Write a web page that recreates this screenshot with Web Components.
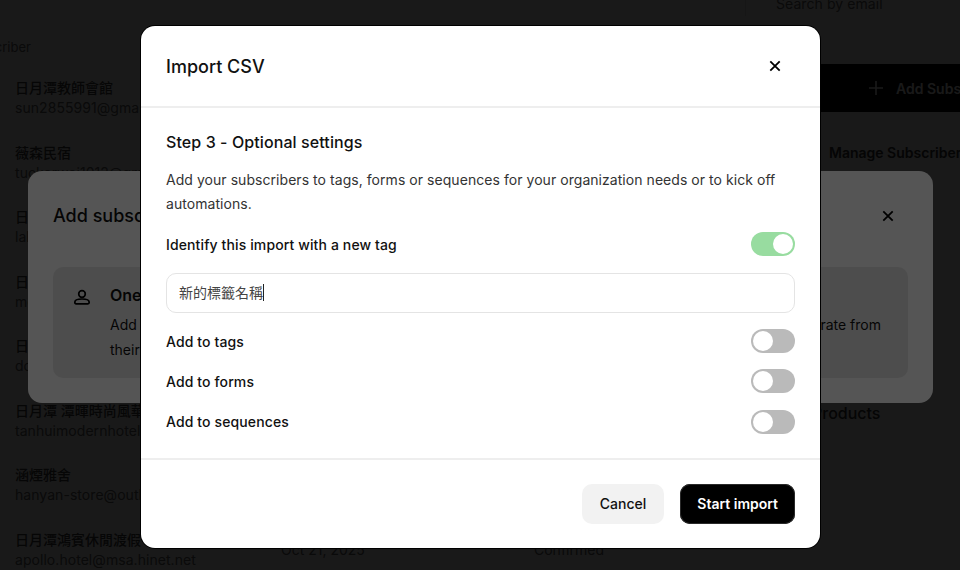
<!DOCTYPE html>
<html lang="zh-Hant">
<head>
<meta charset="utf-8">
<title>Import CSV</title>
<style>
  html, body { margin: 0; padding: 0; height: 100%; overflow: hidden; background: #191919; }
  body { font-family: Inter, "Noto Sans CJK TC", sans-serif; }
</style>
</head>
<body>
<subscribers-page></subscribers-page>
<modal-scrim level="1"></modal-scrim>
<add-dialog></add-dialog>
<modal-scrim level="2"></modal-scrim>
<import-modal></import-modal>

<script>
class SubscriberRow extends HTMLElement {
  connectedCallback() {
    const shadow = this.shadowRoot || this.attachShadow({ mode: "open" });
    shadow.innerHTML = `
      <style>
        :host {
          display: grid;
          grid-template-columns: 266px 253px 1fr;
          height: 64.5px;
          font-size: 14px;
          line-height: 20px;
          color: #666;
        }
        .name { font-weight: 500; color: #444; }
        .email { letter-spacing: .05px; }
        .date { padding-top: 10px; }
      </style>
      <div>
        <div class="name">${this.getAttribute("name")}</div>
        <div class="email">${this.getAttribute("email")}</div>
      </div>
      <div class="date">${this.getAttribute("date") || ""}</div>
      <div class="date">${this.getAttribute("status") || ""}</div>
    `;
  }
}
customElements.define("subscriber-row", SubscriberRow);

class SubscribersPage extends HTMLElement {
  constructor() {
    super();
    const shadow = this.attachShadow({ mode: "open" });
    const rows = [
      ["日月潭教師會館", "sun2855991@gmail.com"],
      ["薇森民宿", "tuckerwei1012@gmail.com"],
      ["日月潭雲品溫泉", "lalu.resort@gmail.com"],
      ["日月潭大飯店", "moonlake@gmail.com"],
      ["日月潭富豪群渡假", "dolly.hotel@gmail.com"],
      ["日月潭 潭暉時尚風華", "tanhuimodernhotel@gmail.com"],
      ["涵煙雅舍", "hanyan-store@outlook.com"],
      ["日月潭鴻賓休閒渡假", "apollo.hotel@msa.hinet.net", "Oct 21, 2025", "Confirmed"],
    ];
    shadow.innerHTML = `
      <style>
        :host {
          display: grid;
          grid-template-columns: 812px 1fr;
          width: 960px;
          height: 570px;
          overflow: hidden;
          background: #fff;
          position: relative;
        }
        .list { padding-top: 40px; padding-left: 15px; }
        .head { margin-left: -51px; height: 38px; font-size: 13px; line-height: 15px; color: #666; }
        .side { font-size: 14px; color: #333; min-width: 0; }
        .search { margin-left: -67px; height: 64px; font-size: 14px; line-height: 8px; letter-spacing: .07px; color: #666; }
        .search span { display: inline-block; height: 16px; padding-left: 30px; border-left: 1px solid #ddd; }
        .add {
          background: #000;
          color: #fff;
          height: 48px;
          width: 300px;
          padding-left: 56px;
          box-sizing: border-box;
          display: flex;
          align-items: center;
          gap: 12px;
          font-weight: 600;
          white-space: nowrap;
        }
        .manage { margin: 31px 0 0 17px; font-weight: 600; line-height: 20px; white-space: nowrap; }
        .products { margin-top: 240px; font-size: 16px; font-weight: 500; line-height: 20px; }
      </style>
      <div class="list">
        <div class="head">Subscriber</div>
        <div id="rows"></div>
      </div>
      <div class="side">
        <div class="search"><span>Search by email</span></div>
        <div class="add">
          <svg width="16" height="16" viewBox="0 0 16 16" fill="none" stroke="#fff" stroke-width="1.6"><path d="M8 1v14M1 8h14"/></svg>
          Add Subscriber
        </div>
        <div class="manage">Manage Subscribers</div>
        <div class="products">Products</div>
      </div>
    `;
    const box = shadow.querySelector("#rows");
    for (const [name, email, date, status] of rows) {
      const row = document.createElement("subscriber-row");
      row.setAttribute("name", name);
      row.setAttribute("email", email);
      if (date) row.setAttribute("date", date);
      if (status) row.setAttribute("status", status);
      box.appendChild(row);
    }
  }
}
customElements.define("subscribers-page", SubscribersPage);

class ModalScrim extends HTMLElement {
  constructor() {
    super();
    const shadow = this.attachShadow({ mode: "open" });
    shadow.innerHTML = `
      <style>
        :host {
          display: block;
          position: absolute;
          inset: 0;
          background: rgba(0, 0, 0, .7);
        }
        :host([level="2"]) { background: rgba(0, 0, 0, .667); }
      </style>
    `;
  }
}
customElements.define("modal-scrim", ModalScrim);

class CloseIcon extends HTMLElement {
  constructor() {
    super();
    const shadow = this.attachShadow({ mode: "open" });
    shadow.innerHTML = `
      <style>:host { display: inline-flex; width: 12px; height: 12px; }</style>
      <svg width="12" height="12" viewBox="0 0 12 12" fill="none" stroke="#000" stroke-width="1.8"><path d="M1.300 1.300l9.400 9.400M10.700 1.300l-9.400 9.400"/></svg>
    `;
  }
}
customElements.define("close-icon", CloseIcon);

class AddDialog extends HTMLElement {
  constructor() {
    super();
    const shadow = this.attachShadow({ mode: "open" });
    shadow.innerHTML = `
      <style>
        :host {
          display: block;
          position: absolute;
          left: 28px;
          top: 171px;
          width: 905px;
          height: 232px;
          box-sizing: border-box;
          padding: 0 25px;
          border-radius: 14px;
          background: #fff;
          color: #111;
        }
        header {
          display: flex;
          justify-content: space-between;
          align-items: center;
          height: 89px;
          margin-bottom: 7px;
          padding-right: 14px;
          font-size: 18px;
          font-weight: 500;
        }
        .card {
          display: flex;
          justify-content: space-between;
          height: 111px;
          box-sizing: border-box;
          padding: 18px 27px 0 20px;
          border-radius: 10px;
          background: #e8e8e8;
          font-size: 14px;
          line-height: 25px;
        }
        .one { display: flex; gap: 19px; }
        .one svg { margin-top: 2px; }
        b { font-weight: 600; font-size: 16px; display: block; margin-bottom: 7px; line-height: 20px; }
        .other { margin-top: 27px; }
      </style>
      <header>Add subscribers<close-icon></close-icon></header>
      <div class="card">
        <div class="one">
          <svg width="18" height="18" viewBox="0 0 18 18" fill="none" stroke="#000" stroke-width="1.7"><circle cx="9" cy="7" r="3.300"/><path d="M1.800 15.200c0-2 3-3.200 7.200-3.200s7.200 1.200 7.200 3.200c0 1-.5 1.600-1.300 1.600H3.100c-.8 0-1.300-.6-1.300-1.600z"/></svg>
          <div><b>One by one</b>Add a subscriber and<br>their details</div>
        </div>
        <div class="other">Or migrate from</div>
      </div>
    `;
  }
}
customElements.define("add-dialog", AddDialog);

class ToggleSwitch extends HTMLElement {
  constructor() {
    super();
    const shadow = this.attachShadow({ mode: "open" });
    shadow.innerHTML = `
      <style>
        :host {
          display: flex;
          justify-content: flex-start;
          flex: none;
          width: 44px;
          height: 24px;
          box-sizing: border-box;
          padding: 2px;
          border-radius: 12px;
          background: #bababa;
        }
        :host([on]) { background: #98dca0; justify-content: flex-end; }
        i { display: block; width: 20px; height: 20px; border-radius: 50%; background: #fff; }
      </style>
      <i></i>
    `;
  }
}
customElements.define("toggle-switch", ToggleSwitch);

class SettingRow extends HTMLElement {
  connectedCallback() {
    const shadow = this.shadowRoot || this.attachShadow({ mode: "open" });
    shadow.innerHTML = `
      <style>
        :host {
          display: flex;
          justify-content: space-between;
          align-items: center;
          height: 24px;
          font-size: 14px;
          font-weight: 500;
          letter-spacing: .12px;
          color: #111;
        }
      </style>
      <slot></slot>
      <toggle-switch ${this.hasAttribute("on") ? "on" : ""}></toggle-switch>
    `;
  }
}
customElements.define("setting-row", SettingRow);

class ActionButton extends HTMLElement {
  constructor() {
    super();
    const shadow = this.attachShadow({ mode: "open" });
    shadow.innerHTML = `
      <style>
        :host {
          display: inline-flex;
          align-items: center;
          justify-content: center;
          height: 40px;
          box-sizing: border-box;
          padding: 0 18px 2px;
          border-radius: 10px;
          background: #f2f2f2;
          color: #111;
          font-size: 14px;
          font-weight: 500;
        }
        :host([primary]) { padding: 0 17px 2px; background: #000; color: #fff; font-weight: 600; box-shadow: inset 0 0 0 1px #2a2a2a; }
      </style>
      <slot></slot>
    `;
  }
}
customElements.define("action-button", ActionButton);

class ImportModal extends HTMLElement {
  constructor() {
    super();
    const shadow = this.attachShadow({ mode: "open" });
    shadow.innerHTML = `
      <style>
        :host {
          display: block;
          position: absolute;
          left: 141px;
          top: 26px;
          width: 679px;
          height: 522px;
          border-radius: 14px;
          background: #fff;
          box-shadow: 0 0 0 1px #000;
          color: #111;
        }
        header {
          display: flex;
          justify-content: space-between;
          align-items: center;
          height: 82px;
          padding: 0 39px 0 25px;
          border-bottom: 2px solid #eee;
          box-sizing: border-box;
          font-size: 18px;
          font-weight: 500;
        }
        main { padding: 23px 25px 0; height: 350px; box-sizing: border-box; display: flex; flex-direction: column; }
        h2 { margin: 0; font-size: 16px; font-weight: 500; line-height: 22px; letter-spacing: .09px; }
        p { margin: 15px 0 0; font-size: 14px; line-height: 24px; letter-spacing: .05px; color: #333; }
        .first { margin-top: 16px; }
        .field {
          margin: 17px 0 16px;
          height: 40px;
          box-sizing: border-box;
          padding: 0 12px 2px;
          display: flex;
          align-items: center;
          border: 1px solid #e4e4e4;
          border-radius: 10px;
          font-size: 14px;
          color: #444;
        }
        .caret { display: inline-block; width: 1px; height: 17px; background: #222; }
        setting-row + setting-row { margin-top: 16.400px; }
        footer {
          display: flex;
          justify-content: flex-end;
          align-items: center;
          gap: 16px;
          height: 90px;
          padding: 0 25px;
          border-top: 2px solid #eee;
          box-sizing: border-box;
        }
      </style>
      <header>Import CSV<close-icon></close-icon></header>
      <main>
        <h2>Step 3 - Optional settings</h2>
        <p>Add your subscribers to tags, forms or sequences for your organization needs or to kick off automations.</p>
        <setting-row class="first" on>Identify this import with a new tag</setting-row>
        <div class="field">新的標籤名稱<span class="caret"></span></div>
        <setting-row>Add to tags</setting-row>
        <setting-row>Add to forms</setting-row>
        <setting-row>Add to sequences</setting-row>
      </main>
      <footer>
        <action-button>Cancel</action-button>
        <action-button primary>Start import</action-button>
      </footer>
    `;
  }
}
customElements.define("import-modal", ImportModal);
</script>
</body>
</html>
